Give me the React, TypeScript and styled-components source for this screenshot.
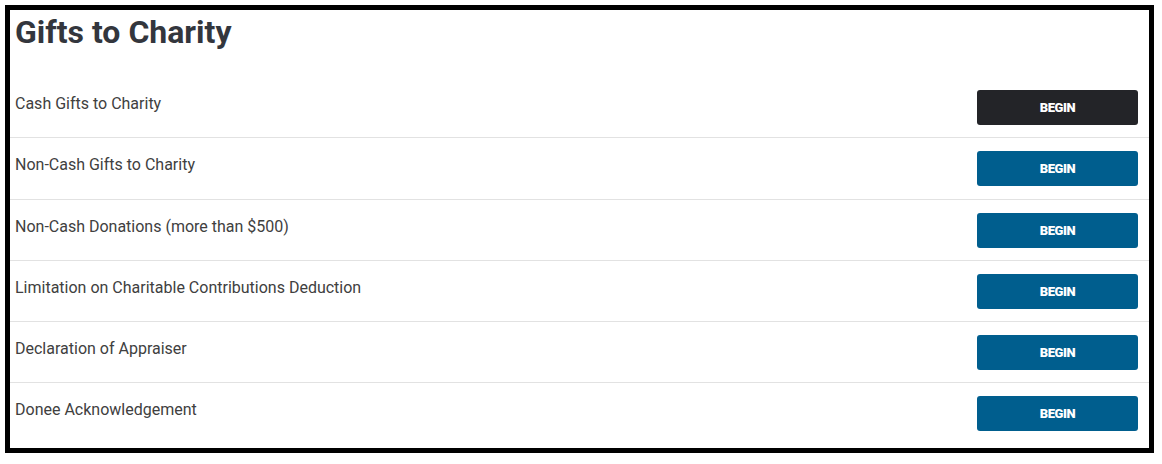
import React from "react";
import styled, { createGlobalStyle } from "styled-components";

const Global = createGlobalStyle`
  html, body { margin: 0; padding: 0; background: #ffffff; }
  body { font-family: Roboto, "Noto Sans", sans-serif; }
`;

const Frame = styled.div`
  margin: 5px;
  width: 1149px;
  height: 448px;
  box-sizing: border-box;
  border: 5px solid #000000;
  background: #ffffff;
  display: flex;
  flex-direction: column;
`;

const Title = styled.h1`
  margin: 0;
  padding: 2px 0 0 5px;
  height: 67px;
  box-sizing: border-box;
  font-family: Roboto, sans-serif;
  font-weight: 700;
  font-size: 32px;
  line-height: 40px;
  color: #33363d;
`;

const List = styled.div`
  display: flex;
  flex-direction: column;
`;

const Row = styled.div<{ $last?: boolean }>`
  display: flex;
  justify-content: space-between;
  align-items: flex-start;
  padding: 13px 11px 12.25px 5px;
  border-bottom: 1px solid ${(p) => (p.$last ? "transparent" : "#e2e2e2")};
`;

const Label = styled.span`
  font-family: Roboto, sans-serif;
  font-size: 16px;
  line-height: 28px;
  color: #404040;
`;

const Button = styled.button<{ $dark?: boolean }>`
  width: 161px;
  height: 35px;
  border: none;
  border-radius: 3px;
  background: ${(p) => (p.$dark ? "#232428" : "#005e8e")};
  color: #ffffff;
  font-family: Roboto, sans-serif;
  font-weight: 900;
  font-size: 13px;
  letter-spacing: -0.4px;
  text-transform: uppercase;
  cursor: pointer;
  padding: 0;
`;

const items = [
  "Cash Gifts to Charity",
  "Non-Cash Gifts to Charity",
  "Non-Cash Donations (more than $500)",
  "Limitation on Charitable Contributions Deduction",
  "Declaration of Appraiser",
  "Donee Acknowledgement",
];

export default function App() {
  return (
    <>
      <Global />
      <Frame>
        <Title>Gifts to Charity</Title>
        <List>
          {items.map((label, i) => (
            <Row key={label} $last={i === items.length - 1}>
              <Label>{label}</Label>
              <Button $dark={i === 0}>Begin</Button>
            </Row>
          ))}
        </List>
      </Frame>
    </>
  );
}
